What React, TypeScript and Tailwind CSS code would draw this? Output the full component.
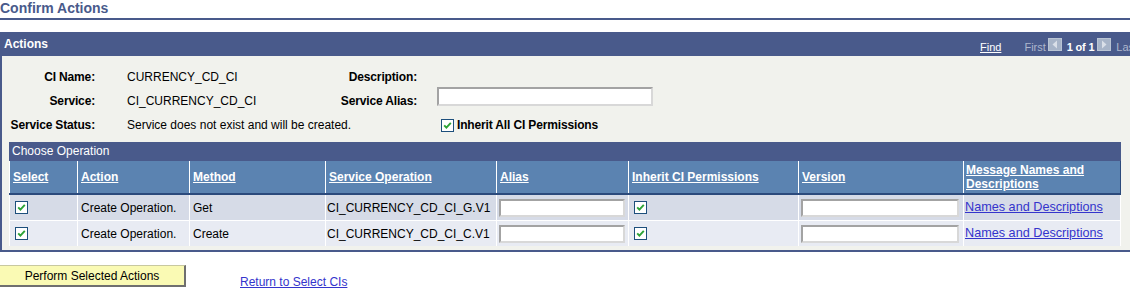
import React from "react";

const Check = () => (
  <span className="inline-flex w-[13px] h-[13px] shrink-0 items-center justify-center border border-[#1d4f7c] bg-white">
    <svg width="9" height="9" viewBox="0 0 9 9">
      <path d="M1.2 4.3 L3.4 6.6 L7.8 1.8" stroke="#2da336" strokeWidth="1.9" fill="none" />
    </svg>
  </span>
);

const Arrow = ({ dir }: { dir: "l" | "r" }) => (
  <span className="inline-flex w-[14px] h-[13px] items-center justify-center bg-[#a7b4c8] border border-[#b9c4d4]">
    <svg width="8" height="9" viewBox="0 0 8 9">
      {dir === "l" ? (
        <path d="M6 0.5 L1.5 4.5 L6 8.5 Z" fill="#d9dfe8" />
      ) : (
        <path d="M2 0.5 L6.5 4.5 L2 8.5 Z" fill="#d9dfe8" />
      )}
    </svg>
  </span>
);

const widths = ["w-[68px]", "w-[112px]", "w-[136px]", "w-[171px]", "w-[132px]", "w-[170px]", "w-[165px]", "w-[158px]"];
const headers = ["Select", "Action", "Method", "Service Operation", "Alias", "Inherit CI Permissions", "Version", "Message Names and Descriptions"];

const TextInput = ({ w }: { w: string }) => (
  <span className={`block ${w} h-[18px] bg-white border-2 border-t-[#a3a3a3] border-l-[#a3a3a3] border-b-[#d8d8d8] border-r-[#d8d8d8]`} />
);

const Row = ({ method, op, bg, top }: { method: string; op: string; bg: string; top?: boolean }) => (
  <div className={`flex ${bg} ${top ? "h-[26px] border-t border-white" : "h-[25px]"}`}>
    <div className={`${widths[0]} border-l border-white flex items-center pl-[5px]`}>
      <Check />
    </div>
    <div className={`${widths[1]} border-l border-white flex items-center pl-[3px]`}>Create Operation.</div>
    <div className={`${widths[2]} border-l border-white flex items-center pl-[3px]`}>{method}</div>
    <div className={`${widths[3]} border-l border-white flex items-center pl-[1px]`}>{op}</div>
    <div className={`${widths[4]} border-l border-white flex items-center pl-[2px]`}>
      <TextInput w="w-[126px]" />
    </div>
    <div className={`${widths[5]} border-l border-white flex items-center pl-[5px]`}>
      <Check />
    </div>
    <div className={`${widths[6]} border-l border-white flex items-center pl-[2px]`}>
      <TextInput w="w-[158px]" />
    </div>
    <div className={`${widths[7]} border-l border-r border-white flex items-center pl-[1px]`}>
      <a className="text-[12.67px] text-[#3434cc] underline cursor-pointer">Names and Descriptions</a>
    </div>
  </div>
);

export default function App() {
  return (
    <div className="w-[1130px] h-[306px] overflow-hidden bg-white text-[12px] text-black font-['Liberation_Sans',Arial,sans-serif]">
      <div className="h-[20px] border-b-2 border-[#495a8b] text-[14px] leading-[16px] font-bold text-[#495a8b]">
        Confirm Actions
      </div>

      <div className="mt-[12px] w-[1140px]">
        <div className="flex items-start h-[24px] bg-[#495a8b] text-white">
          <span className="w-[980px] pl-[4px] font-bold leading-[24px]">Actions</span>
          <span className="mt-[9px] text-[11px] leading-[13px] underline">Find</span>
          <span className="ml-[23px] mt-[9px] text-[11px] leading-[13px] text-[#aeb7cd]">First</span>
          <span className="ml-[2px] mt-[6px] flex"><Arrow dir="l" /></span>
          <span className="ml-[5px] mt-[9px] text-[11px] leading-[13px] font-bold tracking-[-0.2px]">1 of 1</span>
          <span className="ml-[3px] mt-[6px] flex"><Arrow dir="r" /></span>
          <span className="ml-[5px] mt-[9px] text-[11px] leading-[13px] text-[#aeb7cd]">Last</span>
        </div>

        <div className="border-l-2 border-b-2 border-[#495a8b] bg-[#f1f2ed] pt-[9px] pb-[4px]">
          <div className="flex items-center h-[24px]">
            <span className="w-[93px] text-right font-bold tracking-[-0.15px]">CI Name:</span>
            <span className="ml-[32px] w-[133px]">CURRENCY_CD_CI</span>
            <span className="w-[157px] text-right font-bold tracking-[-0.15px]">Description:</span>
          </div>
          <div className="flex items-center h-[24px]">
            <span className="w-[93px] text-right font-bold tracking-[-0.15px]">Service:</span>
            <span className="ml-[32px] w-[133px]">CI_CURRENCY_CD_CI</span>
            <span className="w-[157px] text-right font-bold tracking-[-0.15px]">Service Alias:</span>
            <span className="ml-[20px] self-start -mt-[2px]">
              <span className="block w-[216px] h-[19px] bg-white border-2 border-t-[#a3a3a3] border-l-[#a3a3a3] border-b-[#d8d8d8] border-r-[#d8d8d8]" />
            </span>
          </div>
          <div className="flex items-center h-[24px]">
            <span className="w-[93px] text-right font-bold tracking-[-0.15px]">Service Status:</span>
            <span className="ml-[32px] w-[310px]">Service does not exist and will be created.</span>
            <span className="ml-[4px] flex items-center gap-[3px]">
              <Check />
              <span className="font-bold tracking-[-0.15px]">Inherit All CI Permissions</span>
            </span>
          </div>

          <div className="ml-[7px] mt-[5px] w-[1112px]">
            <div className="h-[19px] bg-[#495a8b] text-white pl-[3px] leading-[19px]">Choose Operation</div>
            <div className="flex h-[34px] bg-[#5b83b1] border-b-2 border-[#2b4a7c]">
              {headers.map((h, i) => (
                <div
                  key={h}
                  className={`${widths[i]} border-l border-white flex items-center ${i === 7 ? "border-r border-r-[#2b4a7c] pl-[2px]" : "pl-[3px]"} leading-[14px]`}
                >
                  <span className="text-white font-bold underline">{h}</span>
                </div>
              ))}
            </div>
            <Row method="Get" op="CI_CURRENCY_CD_CI_G.V1" bg="bg-[#d6dbe7]" />
            <Row method="Create" op="CI_CURRENCY_CD_CI_C.V1" bg="bg-[#e8ebf3]" top />
          </div>
        </div>
      </div>

      <div className="flex items-start mt-[13px]">
        <button className="w-[186px] h-[22px] bg-[#fafab4] border-t border-t-[#c8c8a0] border-r-2 border-b-2 border-r-[#6f6f6f] border-b-[#6f6f6f] text-[12px] leading-[18px] text-black">
          Perform Selected Actions
        </button>
        <a className="ml-[54px] mt-[10px] leading-[14px] text-[#3434cc] underline cursor-pointer">Return to Select CIs</a>
      </div>
    </div>
  );
}
